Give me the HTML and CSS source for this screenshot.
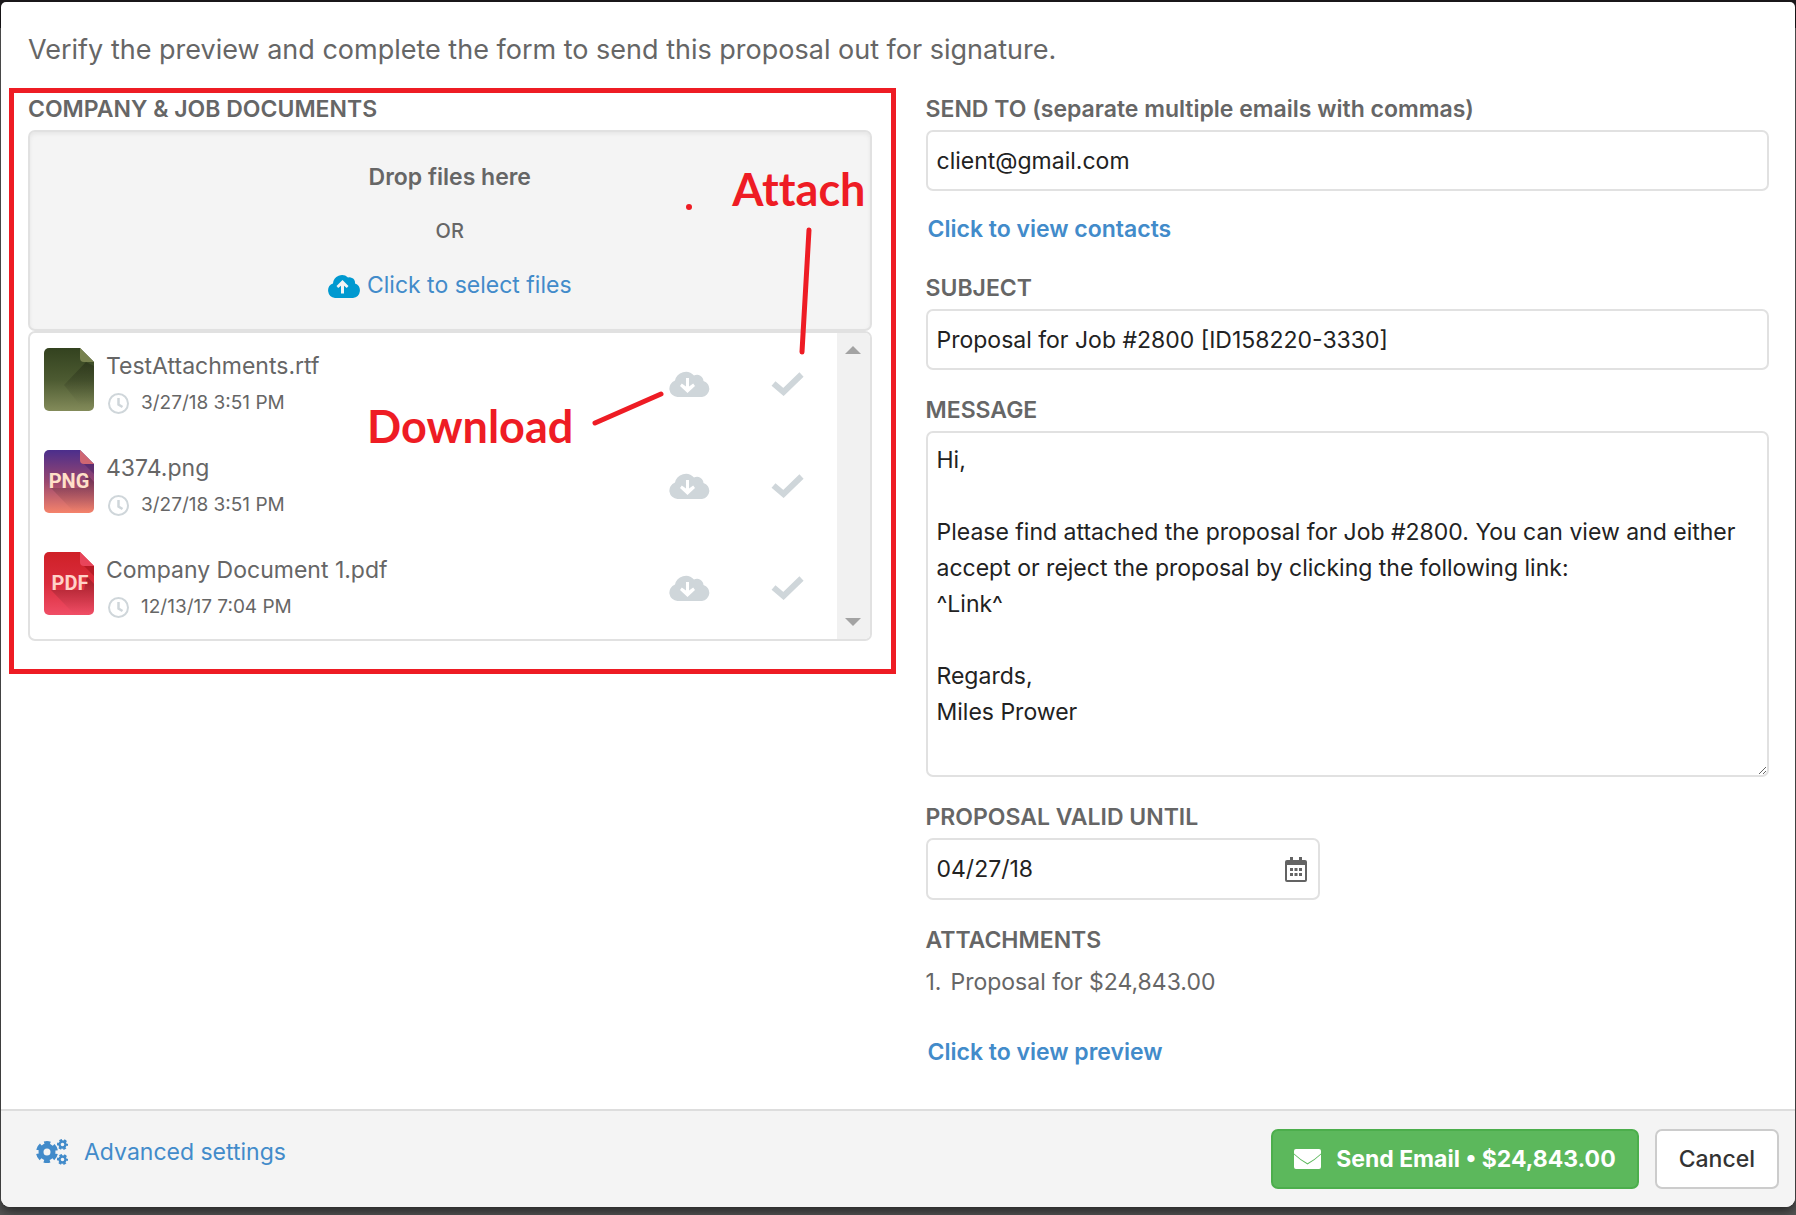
FILE: index.html
```html
<!DOCTYPE html>
<html lang="en">
<head>
<meta charset="utf-8">
<meta name="viewport" content="width=device-width, initial-scale=1">
<title>Send proposal</title>
<link rel="stylesheet" href="styles.css">
</head>
<body>
<svg class="defs" aria-hidden="true">
  <defs>
    <linearGradient id="g-rtf" x2="0" y2="1"><stop offset="0" stop-color="#33421f"/><stop offset=".5" stop-color="#4c5a31"/><stop offset="1" stop-color="#838b5a"/></linearGradient>
    <linearGradient id="g-png" x2="0" y2="1"><stop offset="0" stop-color="#4b2e8c"/><stop offset=".5" stop-color="#98466f"/><stop offset="1" stop-color="#f5836b"/></linearGradient>
    <linearGradient id="g-pdf" x2="0" y2="1"><stop offset="0" stop-color="#cf2027"/><stop offset=".5" stop-color="#d92c3c"/><stop offset="1" stop-color="#f04e66"/></linearGradient>
    <linearGradient id="g-fade" x2="0" y2="1"><stop offset="0" stop-color="#000" stop-opacity=".25"/><stop offset="1" stop-color="#000" stop-opacity="0"/></linearGradient>
    <symbol id="page" viewBox="0 0 50 63"><path d="M5 0H36L50 14V58a5 5 0 0 1-5 5H5a5 5 0 0 1-5-5V5a5 5 0 0 1 5-5z"/></symbol>
    <symbol id="cloud-down" viewBox="0 0 41 27"><path fill-rule="evenodd" d="M8.500 27A8.500 8.500 0 0 1 6 10.500 11 11 0 0 1 25 5.500A6.500 6.500 0 0 1 34.500 11 8.200 8.200 0 0 1 33 27zM17 8V16.500L12.800 13.500 11 16 18.500 23 26 16 24.200 13.500 20 16.500V8z"/></symbol>
    <symbol id="cloud-up" viewBox="0 0 32 25"><path fill-rule="evenodd" d="M7 25A7.500 7.500 0 0 1 5 10.500 9 9 0 0 1 20 4.500A5.500 5.500 0 0 1 27 10.500 7.500 7.500 0 0 1 25 25zM14.500 7 8.500 13 10.200 15 13 12.800V20.500H16V12.800L18.800 15 20.500 13z"/></symbol>
    <symbol id="check" viewBox="0 0 33 24"><path d="M2.500 11.500 12.500 20 30.500 2.500" fill="none" stroke="currentColor" stroke-width="6"/></symbol>
    <symbol id="clock" viewBox="0 0 21 21"><g fill="none" stroke="currentColor"><circle cx="10.500" cy="10.500" r="9.500" stroke-width="2"/><path d="M10.500 5V11.500L14.500 14" stroke-width="2.500"/></g></symbol>
  </defs>
</svg>

<main class="modal">
  <div class="modal-body">
    <p class="intro">Verify the preview and complete the form to send this proposal out for signature.</p>
    <div class="columns">
      <section class="documents">
        <h2 class="label">COMPANY &amp; JOB DOCUMENTS</h2>
        <div class="dropzone">
          <strong class="drop-title">Drop files here</strong>
          <span class="drop-or">OR</span>
          <a class="drop-link" href="#"><svg width="32" height="25" class="upload-icon"><use href="#cloud-up"/></svg>Click to select files</a>
        </div>
        <div class="file-panel">
          <ul class="files">
            <li class="file">
              <svg class="file-icon" viewBox="0 0 50 63"><use href="#page" fill="url(#g-rtf)"/><path d="M20 37 36 57H50V18L42 14z" fill="url(#g-fade)"/><path d="M36 0V10a4 4 0 0 0 4 4H50z" fill="#78824f"/></svg>
              <div class="file-text"><span class="file-name">TestAttachments.rtf</span><span class="file-date"><svg class="clock"><use href="#clock"/></svg>3/27/18 3:51 PM</span></div>
              <button class="icon-button" aria-label="Download"><svg class="cloud"><use href="#cloud-down"/></svg></button>
              <button class="icon-button" aria-label="Attach"><svg class="check"><use href="#check"/></svg></button>
            </li>
            <li class="file">
              <svg class="file-icon" viewBox="0 0 50 63"><use href="#page" fill="url(#g-png)"/><path d="M7 38 30 62H50V32L43 24 40 38z" fill="url(#g-fade)"/><path d="M40 14H50V24z" fill="#3c1c5c" opacity=".4"/><path d="M36 0V10a4 4 0 0 0 4 4H50z" fill="#cf6672"/><text class="file-type" x="25" y="38" fill="#ffe0c8">PNG</text></svg>
              <div class="file-text"><span class="file-name">4374.png</span><span class="file-date"><svg class="clock"><use href="#clock"/></svg>3/27/18 3:51 PM</span></div>
              <button class="icon-button" aria-label="Download"><svg class="cloud"><use href="#cloud-down"/></svg></button>
              <button class="icon-button" aria-label="Attach"><svg class="check"><use href="#check"/></svg></button>
            </li>
            <li class="file">
              <svg class="file-icon" viewBox="0 0 50 63"><use href="#page" fill="url(#g-pdf)"/><path d="M7 38 30 62H50V32L43 24 40 38z" fill="url(#g-fade)"/><path d="M40 14H50V24z" fill="#8c0a14" opacity=".4"/><path d="M36 0V10a4 4 0 0 0 4 4H50z" fill="#e8445a"/><text class="file-type" x="26" y="38" fill="#ffd2c8">PDF</text></svg>
              <div class="file-text"><span class="file-name">Company Document 1.pdf</span><span class="file-date"><svg class="clock"><use href="#clock"/></svg>12/13/17 7:04 PM</span></div>
              <button class="icon-button" aria-label="Download"><svg class="cloud"><use href="#cloud-down"/></svg></button>
              <button class="icon-button" aria-label="Attach"><svg class="check"><use href="#check"/></svg></button>
            </li>
          </ul>
          <div class="scrollbar" aria-hidden="true">
            <svg width="16" height="8"><path d="M0 8 8 0 16 8z"/></svg>
            <svg width="16" height="8"><path d="M0 0H16L8 8z"/></svg>
          </div>
        </div>

        <div class="markup-frame"></div>
        <svg class="markup-lines" viewBox="0 0 844 545" aria-hidden="true">
          <path d="M781 135 774 257M567 328 633 299" fill="none" stroke="#ee1c24" stroke-width="5" stroke-linecap="round"/>
          <ellipse cx="661" cy="112" rx="3" ry="3" fill="#ee1c24"/>
        </svg>
        <span class="markup-text markup-attach">Attach</span>
        <span class="markup-text markup-download">Download</span>
      </section>

      <form class="email-form">
        <label class="label" for="to">SEND TO (separate multiple emails with commas)</label>
        <input class="field" id="to" type="text" value="client@gmail.com">
        <a class="bold-link contacts-link" href="#">Click to view contacts</a>
        <label class="label" for="subject">SUBJECT</label>
        <input class="field" id="subject" type="text" value="Proposal for Job #2800 [ID158220-3330]">
        <label class="label spaced" for="message">MESSAGE</label>
        <textarea class="field message" id="message">Hi,

Please find attached the proposal for Job #2800. You can view and either accept or reject the proposal by clicking the following link:
^Link^

Regards,
Miles Prower</textarea>
        <label class="label spaced" for="until">PROPOSAL VALID UNTIL</label>
        <div class="field date-field">
          <input class="date-input" id="until" type="text" value="04/27/18">
          <svg class="calendar" width="22" height="25" viewBox="0 0 22 25"><path fill="#636363" fill-rule="evenodd" d="M5 0H8V3H14V0H17V3H20a2 2 0 0 1 2 2V23a2 2 0 0 1-2 2H2a2 2 0 0 1-2-2V5a2 2 0 0 1 2-2H5zM2 8V23H20V8zM5 11H8V14H5zM9.500 11H12.500V14H9.500zM14 11H17V14H14zM5 16H8V19H5zM9.500 16H12.500V19H9.500zM14 16H17V19H14z"/></svg>
        </div>
        <h2 class="label spaced">ATTACHMENTS</h2>
        <ol class="attachments"><li><span>1.</span><span>Proposal for $24,843.00</span></li></ol>
        <a class="bold-link" href="#">Click to view preview</a>
      </form>
    </div>
  </div>

  <footer class="modal-footer">
    <a class="settings" href="#">
      <svg width="32" height="26" viewBox="0 0 32 26" fill="none" stroke="currentColor">
        <circle cx="11" cy="13" r="6" stroke-width="5"/><circle cx="11" cy="13" r="9.200" stroke-width="3.600" stroke-dasharray="6 3.634" stroke-dashoffset="-1.800"/>
        <circle cx="26.500" cy="5.500" r="3" stroke-width="2.400"/><circle cx="26.500" cy="5.500" r="4.500" stroke-width="2" stroke-dasharray="2.600 2.112" stroke-dashoffset="1.300"/>
        <circle cx="26.500" cy="20.500" r="3" stroke-width="2.400"/><circle cx="26.500" cy="20.500" r="4.500" stroke-width="2" stroke-dasharray="2.600 2.112" stroke-dashoffset="1.300"/>
      </svg>Advanced settings</a>
    <button class="button send"><svg width="27" height="20" viewBox="0 0 27 20" fill="#fff"><path d="M2 0H25a2 2 0 0 1 2 2V4.500Q20 11 13.500 14.300 7 11 0 4.500V2a2 2 0 0 1 2-2z"/><path d="M0 5.500Q7 12 13.500 15.500 20 12 27 5.500V18a2 2 0 0 1-2 2H2a2 2 0 0 1-2-2z"/></svg>Send Email • $24,843.00</button>
    <button class="button cancel">Cancel</button>
  </footer>
</main>
</body>
</html>
```
FILE: styles.css
```css
* { box-sizing: border-box; }

body {
  margin: 0;
  padding: 2px 1px 9px;
  min-height: 100vh;
  background: linear-gradient(#1d1a1d 28px, #666 28px, #555);
  color: #666;
  font: 23px/28px Inter, "Liberation Sans", sans-serif;
}

h2, p, ul, ol { margin: 0; padding: 0; }
ul, ol { list-style: none; }
a { color: #428bca; text-decoration: none; }
input, textarea, button { font: inherit; }
.defs { position: absolute; width: 0; height: 0; }

.modal {
  background: #fff;
  border-radius: 5px 5px 9px 9px;
  box-shadow: 0 4px 12px rgba(0, 0, 0, .6);
  overflow: hidden;
}

.modal-body { padding: 30px 26px 43px 27px; }
.intro { font-size: 27px; line-height: 36px; }

.columns {
  display: grid;
  grid-template-columns: 1fr 1fr;
  gap: 54px;
  margin-top: 27px;
}

.label {
  display: block;
  margin-bottom: 7px;
  font-size: 23px;
  font-weight: 600;
  line-height: 28px;
}
.spaced { margin-top: 26px; }

/* Documents column */
.documents { position: relative; align-self: start; }

.dropzone {
  display: flex;
  flex-direction: column;
  align-items: center;
  gap: 26px;
  padding: 31px 0 30px;
  border: 2px solid #e1e1e1;
  border-radius: 7px;
  background: #f4f4f4;
  box-shadow: inset 0 2px 4px rgba(0, 0, 0, .06);
}
.drop-title { font-weight: 600; }
.drop-or { font-size: 20px; font-weight: 500; }
.drop-link { display: flex; align-items: center; gap: 7px; }
.upload-icon { fill: #0099d0; }

.file-panel {
  display: flex;
  border: 2px solid #e1e1e1;
  border-radius: 7px;
  overflow: hidden;
}
.files { flex: 1; padding-left: 14px; }
.file { display: flex; align-items: flex-start; padding: 15px 0 16px; }
.file-icon { width: 50px; height: 63px; margin-right: 12px; }
.file-type { font: 700 20px Roboto, sans-serif; text-anchor: middle; }
.file-text { display: flex; flex: 1; flex-direction: column; gap: 9px; padding-top: 4px; }
.file-date { display: flex; align-items: center; gap: 12px; font-size: 19px; padding-left: 2px; }
.clock { width: 21px; height: 21px; color: #cfd6da; }
.icon-button {
  display: flex;
  align-items: center;
  justify-content: center;
  width: 98px;
  height: 71px;
  padding: 0;
  border: 0;
  background: none;
  color: #cfd6da;
  fill: currentColor;
}
.cloud { width: 41px; height: 27px; }
.check { width: 33px; height: 24px; }

.scrollbar {
  display: flex;
  flex-direction: column;
  justify-content: space-between;
  align-items: center;
  width: 33px;
  padding: 13px 0;
  background: #f1f1f1;
  fill: #a3a3a3;
}

/* Red guide marks laid over the documents column */
.markup-frame {
  position: absolute;
  inset: -7px -24px -33px -19px;
  border: 5px solid #ee1c24;
}
.markup-lines { position: absolute; top: 0; left: 0; width: 844px; height: 545px; }
.markup-text {
  position: absolute;
  color: #ee1c24;
  font: 700 45px/54px Lato, sans-serif;
  font-variant-ligatures: none;
}
.markup-attach { top: 67px; right: 6px; }
.markup-download { top: 304px; left: 339px; }

/* Email form column */
.field {
  display: block;
  width: 100%;
  height: 61px;
  padding: 0 9px;
  border: 2px solid #e1e1e1;
  border-radius: 7px;
  background: #fff;
  color: #222;
  outline: 0;
}
.bold-link { display: block; padding-left: 2px; font-weight: 600; }
.contacts-link { margin: 24px 0 31px; }
.message { height: 346px; padding: 9px; line-height: 36px; resize: vertical; }
.date-field { display: flex; align-items: center; width: 394px; height: 62px; padding-right: 11px; }
.date-input { flex: 1; min-width: 0; padding: 0; border: 0; outline: 0; background: none; color: #222; }
.attachments { margin: 14px 0 42px; }
.attachments li { display: flex; gap: 9px; }

/* Footer */
.modal-footer {
  display: flex;
  align-items: center;
  gap: 16px;
  padding: 18px 16px 18px 35px;
  border-top: 2px solid #ddd;
  background: #f4f4f4;
}
.settings { display: flex; align-items: center; gap: 16px; margin-right: auto; padding-bottom: 14px; }
.button {
  display: flex;
  align-items: center;
  gap: 15px;
  height: 60px;
  padding: 0 21px;
  border: 2px solid #ccc;
  border-radius: 7px;
  background: #fff;
  color: #333;
  font-weight: 500;
}
.cancel { padding: 0 22px; }
.send { border-color: #4cae4c; background: #5cb85c; color: #fff; font-weight: 700; }
```
